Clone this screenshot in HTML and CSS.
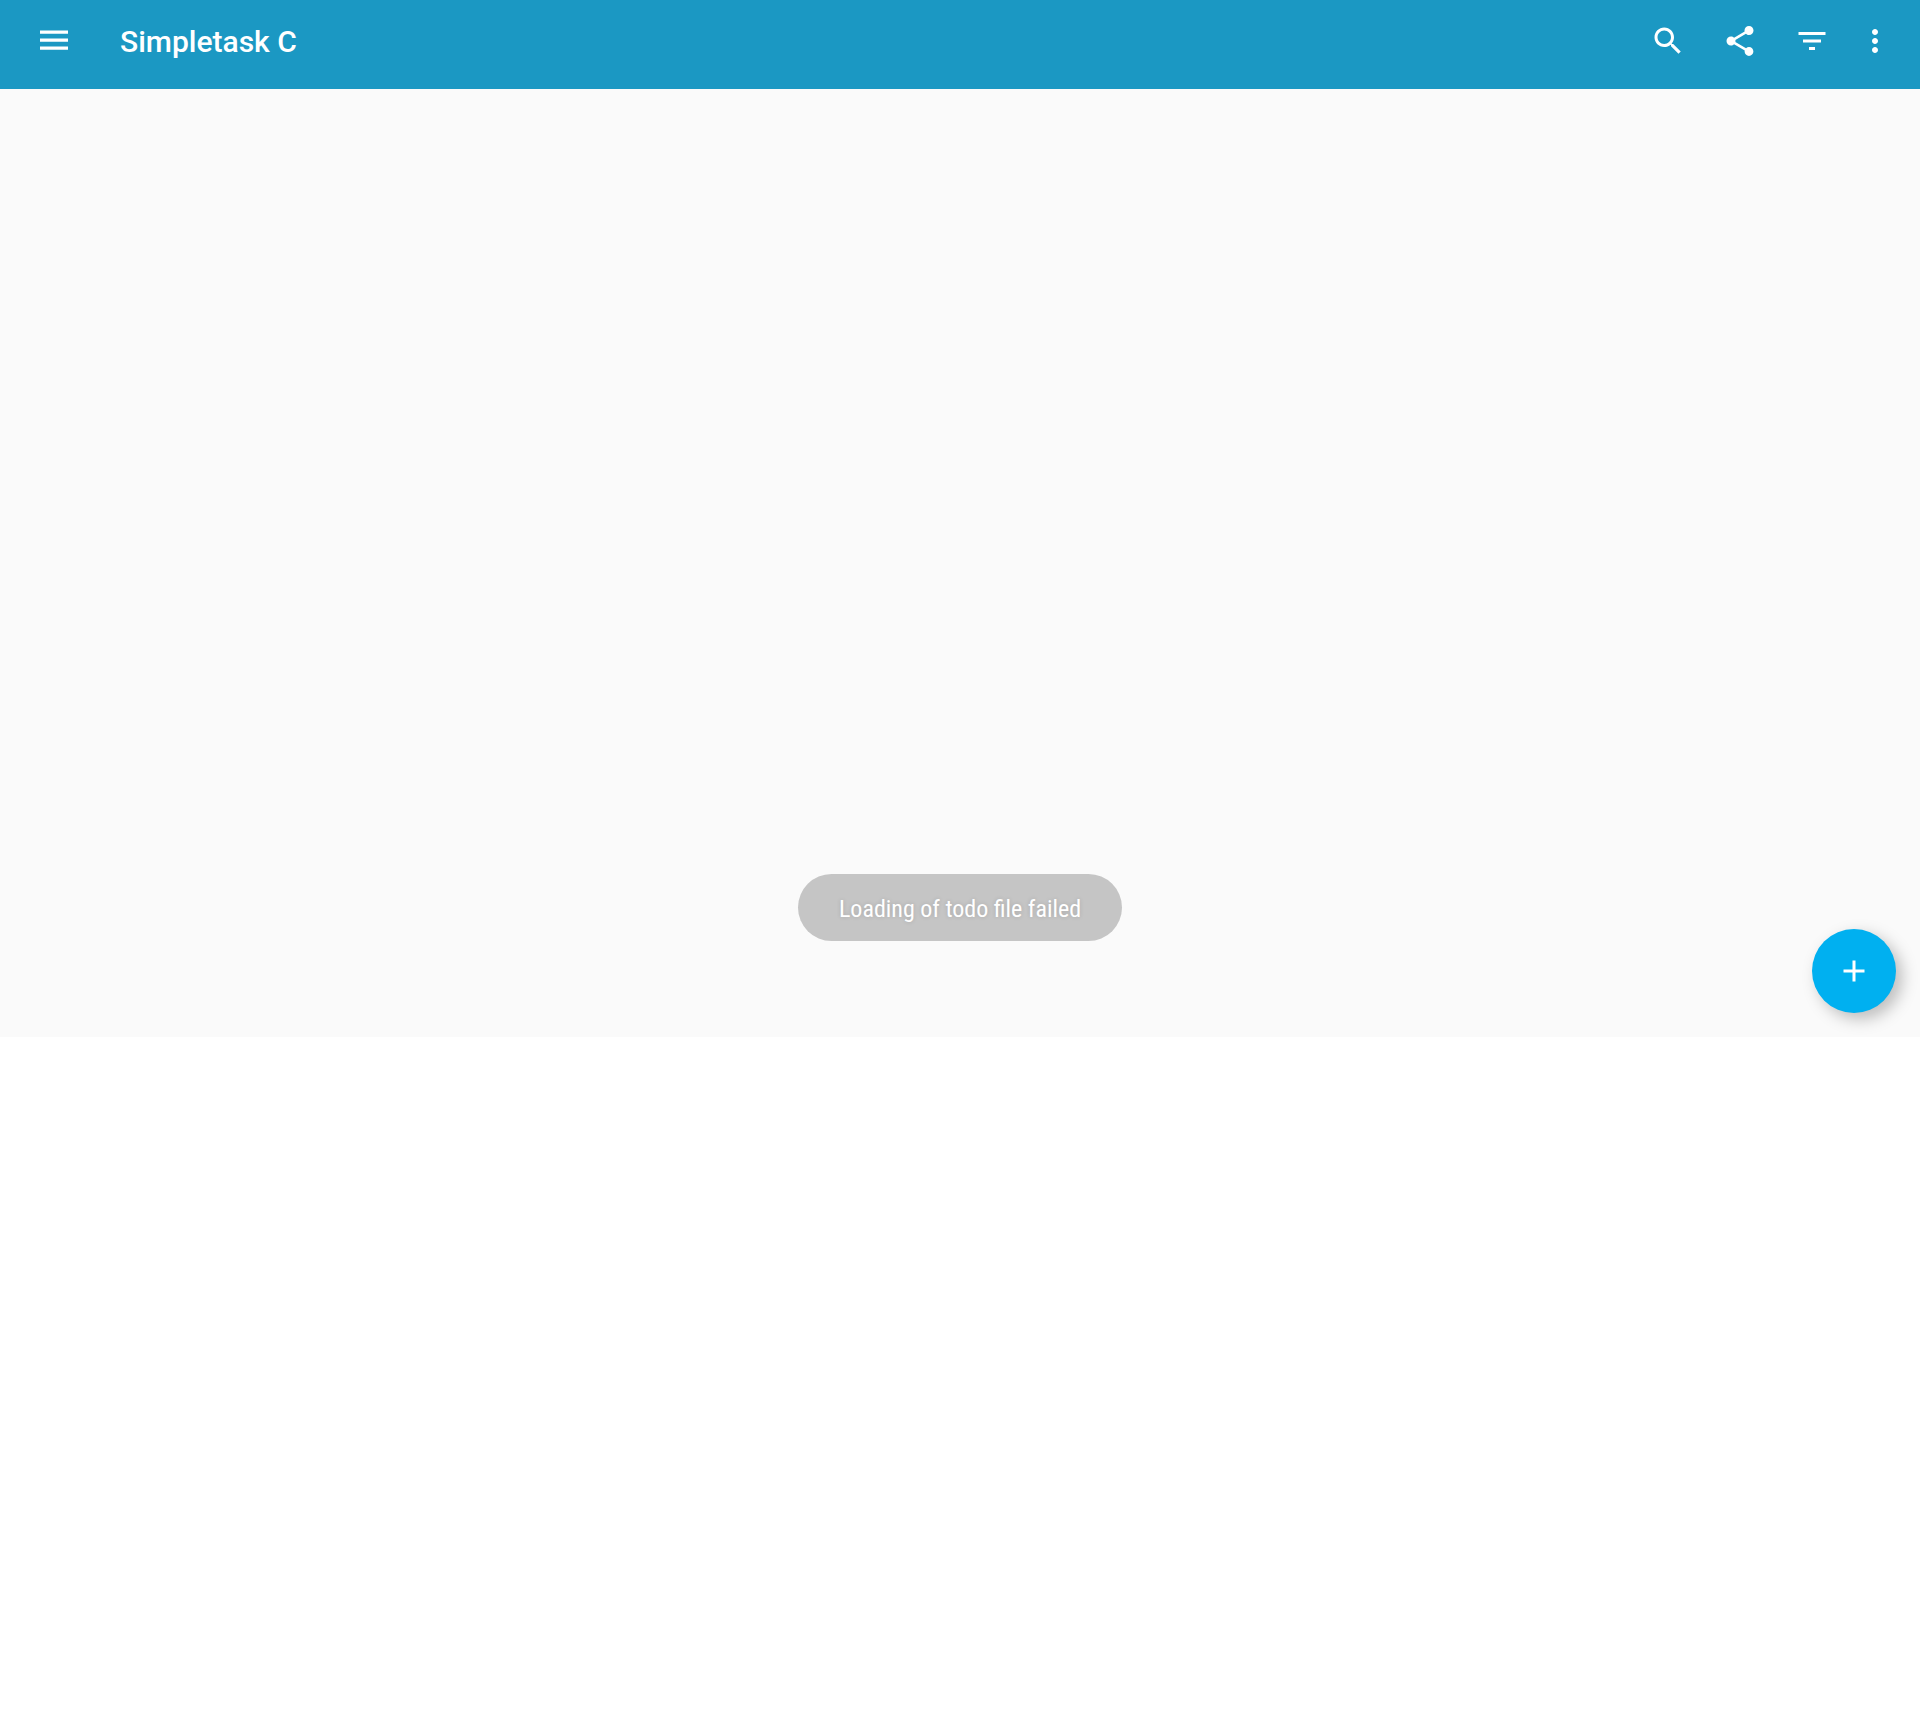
FILE: index.html
```html
<!DOCTYPE html>
<html lang="en">
<head>
<meta charset="utf-8">
<meta name="viewport" content="width=device-width, initial-scale=1">
<title>Simpletask C</title>
<link rel="stylesheet" href="styles.css">
</head>
<body>
<div class="screen">
  <header class="toolbar">
    <button class="icon-button" type="button" aria-label="Open menu">
      <svg class="icon" viewBox="0 0 36 36" aria-hidden="true"><path d="M4 7.6h28v3.1H4zM4 15.6h28v3.1H4zM4 23.6h28v3.1H4z"/></svg>
    </button>
    <h1 class="title">Simpletask C</h1>
    <button class="icon-button" type="button" aria-label="Search">
      <svg class="icon" viewBox="0 0 24 24" aria-hidden="true"><path d="M15.5 14h-.79l-.28-.27C15.41 12.59 16 11.11 16 9.5 16 5.91 13.09 3 9.5 3S3 5.91 3 9.5 5.91 16 9.5 16c1.61 0 3.09-.59 4.23-1.57l.27.28v.79l5 4.99L20.49 19l-4.99-5zm-6 0C7.01 14 5 11.99 5 9.5S7.01 5 9.5 5 14 7.01 14 9.5 11.99 14 9.5 14z"/></svg>
    </button>
    <button class="icon-button" type="button" aria-label="Share">
      <svg class="icon" viewBox="0 0 24 24" aria-hidden="true"><path d="M18 16.08c-.76 0-1.44.3-1.96.77L8.91 12.7c.05-.23.09-.46.09-.7s-.04-.47-.09-.7l7.05-4.11c.54.5 1.25.81 2.04.81 1.66 0 3-1.34 3-3s-1.34-3-3-3-3 1.34-3 3c0 .24.04.47.09.7L8.04 9.81C7.5 9.31 6.79 9 6 9c-1.66 0-3 1.34-3 3s1.34 3 3 3c.79 0 1.5-.31 2.04-.81l7.12 4.16c-.05.21-.08.43-.08.65 0 1.61 1.31 2.92 2.92 2.92s2.92-1.31 2.92-2.92-1.31-2.92-2.92-2.92z"/></svg>
    </button>
    <button class="icon-button" type="button" aria-label="Filter">
      <svg class="icon" viewBox="0 0 24 24" aria-hidden="true"><path d="M10 18h4v-2h-4v2zM3 6v2h18V6H3zm3 7h12v-2H6v2z"/></svg>
    </button>
    <button class="icon-button overflow-button" type="button" aria-label="More options">
      <svg class="icon" viewBox="0 0 24 24" aria-hidden="true"><path d="M12 8c1.1 0 2-.9 2-2s-.9-2-2-2-2 .9-2 2 .9 2 2 2zm0 2c-1.1 0-2 .9-2 2s.9 2 2 2 2-.9 2-2-.9-2-2-2zm0 6c-1.1 0-2 .9-2 2s.9 2 2 2 2-.9 2-2-.9-2-2-2z"/></svg>
    </button>
  </header>
  <main class="tasks">
    <p class="toast" role="status">Loading of todo file failed</p>
    <button class="fab" type="button" aria-label="Add task">
      <svg class="icon" viewBox="0 0 24 24" aria-hidden="true"><path d="M19 13h-6v6h-2v-6H5v-2h6V5h2v6h6v2z"/></svg>
    </button>
  </main>
</div>
</body>
</html>
```
FILE: styles.css
```css
* {
  box-sizing: border-box;
}

body {
  margin: 0;
  background: #fff;
  font-family: Roboto, "Noto Sans", sans-serif;
}

.screen {
  display: flex;
  flex-direction: column;
  aspect-ratio: 1920 / 1037;
}

.toolbar {
  display: flex;
  align-items: center;
  padding: 5px 18px 12px 18px;
  background: #1b98c3;
  color: #fff;
}

.icon {
  display: block;
  width: 36px;
  height: 36px;
  fill: currentColor;
}

.icon-button {
  display: flex;
  align-items: center;
  justify-content: center;
  width: 72px;
  height: 72px;
  padding: 0;
  border: 0;
  background: none;
  color: inherit;
}

.overflow-button {
  width: 54px;
}

.title {
  flex: 1;
  margin: 0;
  padding: 2px 0 0 30px;
  font-size: 30px;
  line-height: 36px;
  font-weight: 500;
}

.tasks {
  position: relative;
  flex: 1;
  display: flex;
  align-items: flex-end;
  justify-content: center;
  padding-bottom: 96px;
  background: #fafafa;
  overflow: hidden;
}

.toast {
  margin: 0;
  padding: 19px 41px 16px;
  border-radius: 34px;
  background: #c5c5c5;
  color: #fff;
  font-family: "Roboto Condensed", Roboto, sans-serif;
  font-size: 24px;
  line-height: 32px;
  font-weight: 400;
  text-shadow: 0 0 4px rgba(0, 0, 0, 0.15);
}

.fab {
  position: absolute;
  right: 24px;
  bottom: 24px;
  display: flex;
  align-items: center;
  justify-content: center;
  width: 84px;
  height: 84px;
  padding: 0;
  border: 0;
  border-radius: 50%;
  background: #00b0f0;
  color: #fff;
  box-shadow: 6px 6px 16px rgba(0, 0, 0, 0.25);
}
```
